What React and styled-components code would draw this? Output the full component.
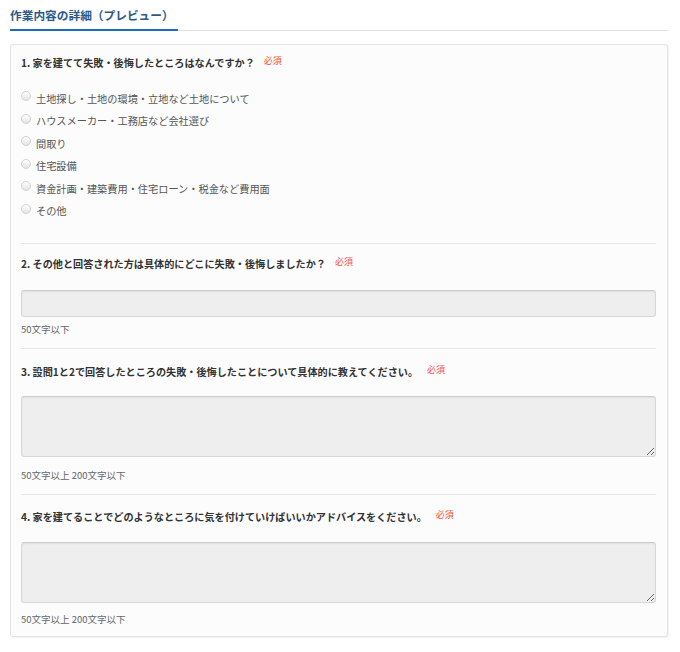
import React from "react";
import styled, { createGlobalStyle } from "styled-components";

const GlobalStyle = createGlobalStyle`
  html, body { margin: 0; padding: 0; background: #ffffff; }
  body { font-family: "Noto Sans CJK JP", "Noto Sans", sans-serif; }
  * { box-sizing: border-box; }
`;

const Page = styled.div`
  width: 680px;
  padding: 0 12px 20px 10px;
`;

const Header = styled.div`
  display: flex;
  border-bottom: 1px solid #e0e0e0;
`;

const Title = styled.h2`
  margin: 0 0 -1px 0;
  padding: 7px 4px 6px 0;
  font-size: 11.7px;
  line-height: 16px;
  font-weight: 700;
  color: #2d5a86;
  border-bottom: 2px solid #1d6cb6;
`;

const Card = styled.div`
  margin-top: 13px;
  background: #fcfcfc;
  border: 1px solid #e3e3e3;
  border-radius: 3px;
  box-shadow: 1px 1px 2px rgba(0, 0, 0, 0.06);
  padding: 0 11px 10px 10px;
`;

const Section = styled.div`
  padding-top: ${(p) => p.$top}px;
  padding-bottom: ${(p) => p.$bottom}px;
  border-top: ${(p) => (p.$first ? "none" : "1px solid #e6e6e6")};
`;

const Question = styled.div`
  display: flex;
  align-items: flex-start;
  font-size: 10.15px;
  line-height: 15px;
  font-weight: 700;
  color: #333333;
`;

const Required = styled.span`
  margin-left: 9px;
  font-size: 9px;
  line-height: 13px;
  font-weight: 400;
  color: #f0533f;
  position: relative;
  top: -1px;
`;

const Options = styled.div`
  margin-top: 17px;
  display: flex;
  flex-direction: column;
`;

const Option = styled.label`
  display: flex;
  align-items: center;
  height: 22.5px;
  font-size: 10.2px;
  color: #555555;
`;

const Radio = styled.span`
  width: 10px;
  height: 10px;
  margin: 0 5px 4px 0;
  border-radius: 50%;
  border: 1px solid #d2d2d2;
  background: linear-gradient(#ffffff, #e4e4e4);
  flex: none;
`;

const TextInput = styled.input`
  display: block;
  width: 100%;
  height: 27px;
  margin: ${(p) => p.$top}px 0 0 0;
  padding: 4px 6px;
  background: #eeeeee;
  border: 1px solid #d8d8d8;
  border-top-color: #cccccc;
  border-radius: 3px;
  box-shadow: inset 0 1px 2px rgba(0, 0, 0, 0.06);
  outline: none;
`;

const TextArea = styled.textarea`
  display: block;
  width: 100%;
  height: 61px;
  margin: ${(p) => p.$top}px 0 0 0;
  padding: 4px 6px;
  background: #eeeeee;
  border: 1px solid #d8d8d8;
  border-top-color: #cccccc;
  border-radius: 3px;
  box-shadow: inset 0 1px 2px rgba(0, 0, 0, 0.06);
  outline: none;
  resize: vertical;
  font-family: inherit;
`;

const Hint = styled.div`
  margin-top: ${(p) => p.$top}px;
  font-size: 9.5px;
  line-height: 13px;
  color: #666666;
  white-space: pre;
`;

const options = [
  "土地探し・土地の環境・立地など土地について",
  "ハウスメーカー・工務店など会社選び",
  "間取り",
  "住宅設備",
  "資金計画・建築費用・住宅ローン・税金など費用面",
  "その他",
];

export default function App() {
  return (
    <>
      <GlobalStyle />
      <Page>
        <Header>
          <Title>作業内容の詳細（プレビュー）</Title>
        </Header>
        <Card>
          <Section $first $top={10} $bottom={21}>
            <Question>
              1. 家を建てて失敗・後悔したところはなんですか？
              <Required>必須</Required>
            </Question>
            <Options>
              {options.map((o) => (
                <Option key={o}>
                  <Radio />
                  {o}
                </Option>
              ))}
            </Options>
          </Section>
          <Section $top={12} $bottom={12}>
            <Question>
              2. その他と回答された方は具体的にどこに失敗・後悔しましたか？
              <Required>必須</Required>
            </Question>
            <TextInput $top={19} />
            <Hint $top={6}>50文字以下</Hint>
          </Section>
          <Section $top={15} $bottom={12}>
            <Question>
              3. 設問1と2で回答したところの失敗・後悔したことについて具体的に教えてください。
              <Required>必須</Required>
            </Question>
            <TextArea $top={17} />
            <Hint $top={12}>50文字以上 200文字以下</Hint>
          </Section>
          <Section $top={14} $bottom={0}>
            <Question>
              4. 家を建てることでどのようなところに気を付けていけばいいかアドバイスをください。
              <Required>必須</Required>
            </Question>
            <TextArea $top={18} />
            <Hint $top={10}>50文字以上 200文字以下</Hint>
          </Section>
        </Card>
      </Page>
    </>
  );
}
